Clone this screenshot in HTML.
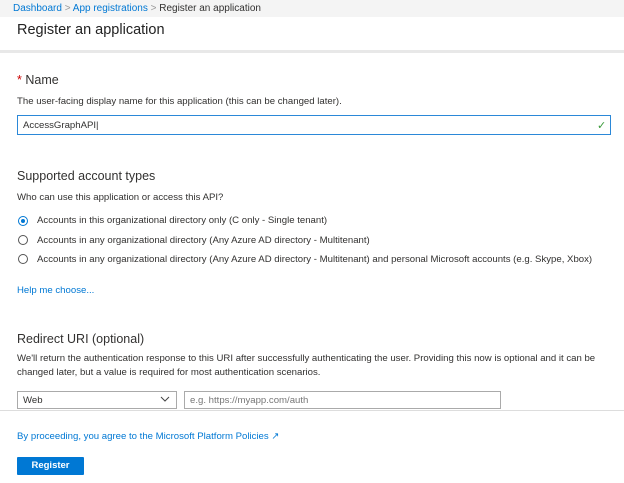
<!DOCTYPE html>
<html><head><meta charset="utf-8"><style>
body{margin:0;width:624px;height:483px;background:#fff;font-family:"Liberation Sans",sans-serif;color:#323130;position:relative;overflow:hidden}
.a{position:absolute;white-space:nowrap}
.s{font-size:9.6px}
.h{font-size:12.5px}
.blue{color:#0078d4}
.r{position:absolute;left:18px;width:10px;height:10px;border:1px solid #555;border-radius:50%;box-sizing:border-box}
</style></head><body>
<div style="position:absolute;left:0;top:0;width:624px;height:17px;background:#f4f4f4"></div>
<div class="a s" style="left:13px;top:3px;font-size:10px"><span class="blue">Dashboard</span> <span style="color:#999">&gt;</span> <span class="blue">App registrations</span> <span style="color:#999">&gt;</span> Register an application</div>
<div class="a" style="left:17px;top:22px;font-size:14.5px;color:#222">Register an application</div>
<div style="position:absolute;left:0;top:50px;width:624px;height:3px;background:#e8e8e8"></div>
<div class="a h" style="left:17px;top:73px"><span style="color:#c00">*</span> Name</div>
<div class="a s" style="left:17px;top:96px">The user-facing display name for this application (this can be changed later).</div>
<div style="position:absolute;left:17px;top:115px;width:594px;height:20px;border:1px solid #2b88d8;box-sizing:border-box"></div>
<div class="a s" style="left:23px;top:120px">AccessGraphAPI|</div>
<div class="a" style="left:597px;top:119px;color:#3a9a3a;font-size:11px">✓</div>
<div class="a h" style="left:17px;top:169px">Supported account types</div>
<div class="a s" style="left:17px;top:192px">Who can use this application or access this API?</div>
<div class="r" style="top:216px;border-color:#0078d4"><div style="position:absolute;left:2px;top:2px;width:4px;height:4px;border-radius:50%;background:#0078d4"></div></div>
<div class="a s" style="left:37px;top:215px">Accounts in this organizational directory only (C only - Single tenant)</div>
<div class="r" style="top:235px"></div>
<div class="a s" style="left:37px;top:235px">Accounts in any organizational directory (Any Azure AD directory - Multitenant)</div>
<div class="r" style="top:254px"></div>
<div class="a s" style="left:37px;top:254px">Accounts in any organizational directory (Any Azure AD directory - Multitenant) and personal Microsoft accounts (e.g. Skype, Xbox)</div>
<div class="a s blue" style="left:17px;top:285px">Help me choose...</div>
<div class="a h" style="left:17px;top:332px">Redirect URI (optional)</div>
<div class="a s" style="left:17px;top:353px">We'll return the authentication response to this URI after successfully authenticating the user. Providing this now is optional and it can be</div>
<div class="a s" style="left:17px;top:367px">changed later, but a value is required for most authentication scenarios.</div>
<div style="position:absolute;left:17px;top:391px;width:160px;height:18px;border:1px solid #aaa;box-sizing:border-box"></div>
<div class="a s" style="left:23px;top:395px">Web</div>
<svg style="position:absolute;left:160px;top:396px" width="10" height="7"><path d="M1 1 L5 5 L9 1" fill="none" stroke="#444" stroke-width="1"/></svg>
<div style="position:absolute;left:184px;top:391px;width:317px;height:18px;border:1px solid #aaa;box-sizing:border-box"></div>
<div class="a s" style="left:190px;top:395px;color:#777">e.g. https://myapp.com/auth</div>
<div style="position:absolute;left:0;top:410px;width:624px;height:1px;background:#ddd"></div>
<div class="a s blue" style="left:17px;top:431px">By proceeding, you agree to the Microsoft Platform Policies ↗</div>
<div style="position:absolute;left:17px;top:457px;width:67px;height:18px;background:#0078d4;border-radius:1px;color:#fff;font-size:9.5px;font-weight:bold;text-align:center;line-height:18px">Register</div>
</body></html>
